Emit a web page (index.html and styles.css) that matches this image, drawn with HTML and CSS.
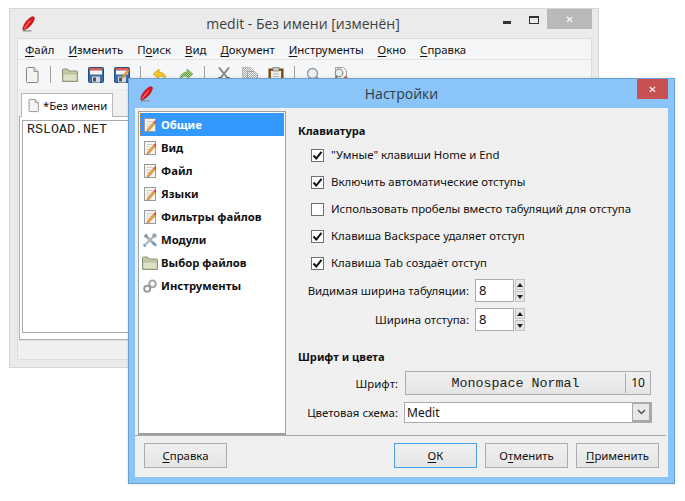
FILE: index.html
```html
<!DOCTYPE html>
<html lang="ru">
<head>
<meta charset="utf-8">
<title>medit</title>
<link rel="stylesheet" href="styles.css">
</head>
<body>
<svg class="defs" width="0" height="0" aria-hidden="true">
  <defs>
    <pattern id="dith-green" width="2" height="2" patternUnits="userSpaceOnUse"><rect width="2" height="2" fill="#5a9a34"/><rect width="1" height="1" fill="#b4d698"/><rect x="1" y="1" width="1" height="1" fill="#b4d698"/></pattern>
    <pattern id="dith-gray" width="2" height="2" patternUnits="userSpaceOnUse"><rect width="2" height="2" fill="#f2f2f2"/><rect width="1" height="1" fill="#a9a9a9"/><rect x="1" y="1" width="1" height="1" fill="#a9a9a9"/></pattern>
    <symbol id="i-quill" viewBox="0 0 16 16">
      <path d="M1.500 15.500h9v-1.300H2.500z" fill="#8d8d8d"/>
      <path d="M1.800 13.800C1.800 9.500 5.500 3.500 10.800.9c1.800-.7 3 .3 2.500 2C12 7.500 8 12 3.600 13.800z" fill="#e0141c" stroke="#a30c12" stroke-width=".6"/>
      <path d="M3 12.800 9.500 4.500" stroke="#ff9c90" stroke-width="1" fill="none"/>
    </symbol>
    <symbol id="i-new" viewBox="0 0 16 16">
      <path d="M2.500 1.500a1 1 0 0 1 1-1h6.500l4 4v10a1 1 0 0 1-1 1h-9.500a1 1 0 0 1-1-1z" fill="#f4f4f0" stroke="#858585"/>
      <path d="M10 .5v4h4" fill="#d8d8d4" stroke="#969696"/>
    </symbol>
    <symbol id="i-folder" viewBox="0 0 16 16">
      <path d="M.5 3a1 1 0 0 1 1-1h4l1.500 2h7.500a1 1 0 0 1 1 1v9.500H.5z" fill="#c3c9a4" stroke="#8c9070"/>
      <path d="M1 7h14v7H1z" fill="#dde1c6" stroke="#a6aa8a" stroke-width=".6"/>
    </symbol>
    <symbol id="i-save" viewBox="0 0 16 16">
      <rect x=".5" y=".5" width="15" height="15" rx="1" fill="#3b6ea8" stroke="#234f86"/>
      <rect x="2" y="1" width="12" height="2.500" fill="#e25a4c"/>
      <rect x="2" y="3.500" width="12" height="4" fill="#f4f4f4"/>
      <rect x="4" y="9.500" width="8" height="6" fill="#d8d8d8"/>
      <rect x="5" y="10.500" width="3" height="4" fill="#4a5560"/>
    </symbol>
    <symbol id="i-saveas" viewBox="0 0 16 16">
      <use href="#i-save"/>
      <path d="M8 9.500 14 2.500l1.500 1.300-6 7-2 .5z" fill="#e8a33c" stroke="#a4651e" stroke-width=".5"/>
      <path d="M14 2.500l1.500 1.300 .5-1.500-1-1z" fill="#d8403a"/>
    </symbol>
    <symbol id="i-undo" viewBox="0 0 16 16">
      <path d="M7 1 1 6l6 5V8c3 0 5 1 7 3 0-4-3-7-7-7z" transform="translate(0 1)" fill="#f1c62c" stroke="#c79a1c" stroke-width=".7"/>
      <path d="M3 13c3 2 8 2 11-1" stroke="#f1c62c" stroke-width="2" fill="none"/>
    </symbol>
    <symbol id="i-redo" viewBox="0 0 16 16">
      <path d="M9 1l6 5-6 5V8c-3 0-5 1-7 3 0-4 3-7 7-7z" transform="translate(0 1)" fill="url(#dith-green)" stroke="#5a9a34" stroke-width=".5"/>
      <path d="M2 13c3 2 8 2 11-1" stroke="url(#dith-green)" stroke-width="2" fill="none"/>
    </symbol>
    <symbol id="i-cut" viewBox="0 0 16 16">
      <path d="M3 .5 11 10.500M13 .5 5 10.500" stroke="#8a8a84" stroke-width="2" fill="none"/>
      <circle cx="4" cy="13" r="2.300" fill="none" stroke="#6e5a48" stroke-width="1.500"/>
      <circle cx="12" cy="13" r="2.300" fill="none" stroke="#6e5a48" stroke-width="1.500"/>
    </symbol>
    <symbol id="i-copy" viewBox="0 0 16 16">
      <path d="M.5.500h8l3 3v9h-11z" fill="url(#dith-gray)" stroke="#b5b5b5"/>
      <path d="M5.500 4.500h7l3 3v8h-10z" fill="url(#dith-gray)" stroke="#a5a5a5"/>
    </symbol>
    <symbol id="i-paste" viewBox="0 0 16 16">
      <rect x="1" y="2" width="14" height="13.500" fill="#8a5a1e" stroke="#6b4514"/>
      <rect x="3" y="4" width="10" height="11" fill="#f0f0ea"/>
      <rect x="5" y=".5" width="6" height="3.500" fill="#c9c9c0" stroke="#77766c" stroke-width=".7"/>
      <path d="M5 7h6M5 9.500h6M5 12h6" stroke="#b8b8b0"/>
    </symbol>
    <symbol id="i-find" viewBox="0 0 16 16">
      <circle cx="6.500" cy="6.500" r="5" fill="#e8eef2" stroke="#9a9a9a" stroke-width="1.400"/>
      <path d="M10.500 10.500 15 15" stroke="#75726c" stroke-width="2.200"/>
    </symbol>
    <symbol id="i-replace" viewBox="0 0 16 16">
      <path d="M3.500.5h8l3 3v10h-11z" fill="#f4f4f0" stroke="#a2a2a2"/>
      <circle cx="7" cy="6" r="3.800" fill="#e8eef2" stroke="#8f8f8f" stroke-width="1.200"/>
      <path d="M2.500 14 5 9" stroke="#7a7670" stroke-width="2"/>
      <path d="M9 13 14 8.500l1.500 1.500-5 4.500-2 .5z" fill="#d9563a"/>
    </symbol>
    <symbol id="i-prefdoc" viewBox="0 0 16 16">
      <rect x="2.500" y="1.500" width="11" height="13" fill="#f6f5f1" stroke="#9a9a9a"/>
      <path d="M4.500 4.500h6M4.500 7h4M4.500 9.500h3" stroke="#cfcdc6"/>
      <path d="M5.500 12 11.500 5l1.700 1.500-6 7-2.200.6z" fill="#eea23a" stroke="#b06a1c" stroke-width=".5"/>
      <path d="M11.500 5l1.200-1.400 1.700 1.500-1.200 1.400z" fill="#d8403a"/>
    </symbol>
    <symbol id="i-tools" viewBox="0 0 16 16">
      <path d="M3 3 13 13" stroke="#a6aeb6" stroke-width="2.600"/>
      <path d="M1.500 4.500 4.500 1.500 6 4 4 6z" fill="#8d969e"/>
      <path d="M13 3 3.500 12.500" stroke="#b3b5b7" stroke-width="2.400"/>
      <path d="M11 1.500h2.500l1 1V5l-2 1-2.500-2.500z" fill="#9da1a4"/>
      <path d="M2 11.500 4.500 14 3 15.200 1 13.200z" fill="#6d9ac8"/>
      <path d="M10 11l3.500 3.500 1.500-1.500-3.500-3.500z" fill="#6d9ac8"/>
    </symbol>
    <symbol id="i-gear" viewBox="0 0 16 16">
      <circle cx="10.500" cy="5.800" r="3.300" fill="none" stroke="#a8a8a8" stroke-width="2.200"/>
      <circle cx="5.200" cy="10.800" r="3" fill="none" stroke="#9b9b9b" stroke-width="2"/>
    </symbol>
    <symbol id="i-tick" viewBox="0 0 11 11">
      <path d="M1.500 5.500 4.300 8.500 9.500 1.800" fill="none" stroke="#111" stroke-width="2"/>
    </symbol>
  </defs>
</svg>

<section class="window main-window">
  <header class="titlebar main-titlebar">
    <svg class="quill"><use href="#i-quill"/></svg>
    <h1 class="title main-title">medit - Без имени [изменён]</h1>
    <div class="controls">
      <span class="ctl-min"></span>
      <span class="ctl-max"></span>
      <span class="ctl-close ctl-close-idle">✕</span>
    </div>
  </header>
  <div class="main-client">
    <nav class="menubar">
      <span><u>Ф</u>айл</span>
      <span><u>И</u>зменить</span>
      <span>П<u>о</u>иск</span>
      <span><u>В</u>ид</span>
      <span><u>Д</u>окумент</span>
      <span><u>И</u>нструменты</span>
      <span><u>О</u>кно</span>
      <span><u>С</u>правка</span>
    </nav>
    <div class="toolbar">
      <svg class="tb-icon"><use href="#i-new"/></svg>
      <span class="tb-sep"></span>
      <svg class="tb-icon"><use href="#i-folder"/></svg>
      <svg class="tb-icon"><use href="#i-save"/></svg>
      <svg class="tb-icon"><use href="#i-saveas"/></svg>
      <span class="tb-sep"></span>
      <svg class="tb-icon"><use href="#i-undo"/></svg>
      <svg class="tb-icon"><use href="#i-redo"/></svg>
      <span class="tb-sep"></span>
      <svg class="tb-icon"><use href="#i-cut"/></svg>
      <svg class="tb-icon"><use href="#i-copy"/></svg>
      <svg class="tb-icon"><use href="#i-paste"/></svg>
      <span class="tb-sep"></span>
      <svg class="tb-icon"><use href="#i-find"/></svg>
      <svg class="tb-icon"><use href="#i-replace"/></svg>
    </div>
    <div class="notebook">
      <div class="tab"><svg class="tab-icon"><use href="#i-new"/></svg><span>*Без имени</span></div>
      <div class="tab-panel">
        <div class="editor">RSLOAD.NET</div>
      </div>
    </div>
    <div class="statusbar"></div>
  </div>
</section>

<section class="window dialog">
  <header class="titlebar dialog-titlebar">
    <svg class="quill"><use href="#i-quill"/></svg>
    <h2 class="title dialog-title">Настройки</h2>
    <div class="controls">
      <span class="ctl-close ctl-close-red">✕</span>
    </div>
  </header>
  <div class="dialog-client">
    <div class="dialog-body">
      <ul class="pref-list">
        <li class="pref-item selected"><svg class="pref-icon"><use href="#i-prefdoc"/></svg>Общие</li>
        <li class="pref-item"><svg class="pref-icon"><use href="#i-prefdoc"/></svg>Вид</li>
        <li class="pref-item"><svg class="pref-icon"><use href="#i-prefdoc"/></svg>Файл</li>
        <li class="pref-item"><svg class="pref-icon"><use href="#i-prefdoc"/></svg>Языки</li>
        <li class="pref-item"><svg class="pref-icon"><use href="#i-prefdoc"/></svg>Фильтры файлов</li>
        <li class="pref-item"><svg class="pref-icon"><use href="#i-tools"/></svg>Модули</li>
        <li class="pref-item"><svg class="pref-icon"><use href="#i-folder"/></svg>Выбор файлов</li>
        <li class="pref-item"><svg class="pref-icon"><use href="#i-gear"/></svg>Инструменты</li>
      </ul>
      <div class="pref-page">
        <h3 class="group-title">Клавиатура</h3>
        <div class="check-rows">
          <div class="check-row"><span class="cb"><svg class="tick"><use href="#i-tick"/></svg></span><span class="cb-text">"Умные" клавиши Home и End</span></div>
          <div class="check-row"><span class="cb"><svg class="tick"><use href="#i-tick"/></svg></span><span class="cb-text">Включить автоматические отступы</span></div>
          <div class="check-row"><span class="cb"></span><span class="cb-text">Использовать пробелы вместо табуляций для отступа</span></div>
          <div class="check-row"><span class="cb"><svg class="tick"><use href="#i-tick"/></svg></span><span class="cb-text">Клавиша Backspace удаляет отступ</span></div>
          <div class="check-row"><span class="cb"><svg class="tick"><use href="#i-tick"/></svg></span><span class="cb-text">Клавиша Tab создаёт отступ</span></div>
        </div>
        <div class="spin-rows">
          <div class="spin-row">
            <span class="spin-label">Видимая ширина табуляции:</span>
            <span class="spin-input">8</span>
            <span class="spin-btns"><span class="spin-btn"><i class="arr-up"></i></span><span class="spin-btn"><i class="arr-down"></i></span></span>
          </div>
          <div class="spin-row">
            <span class="spin-label">Ширина отступа:</span>
            <span class="spin-input">8</span>
            <span class="spin-btns"><span class="spin-btn"><i class="arr-up"></i></span><span class="spin-btn"><i class="arr-down"></i></span></span>
          </div>
        </div>
        <h3 class="group-title group-two">Шрифт и цвета</h3>
        <div class="font-row">
          <span class="field-label">Шрифт:</span>
          <div class="font-btn"><span class="font-name">Monospace Normal</span><span class="font-size">10</span></div>
        </div>
        <div class="scheme-row">
          <span class="field-label">Цветовая схема:</span>
          <div class="combo"><span class="combo-text">Medit</span><span class="combo-arrow"><svg class="chev" viewBox="0 0 9 6"><path d="M1 1l3.500 3.500L8 1" fill="none" stroke="#555" stroke-width="1.500"/></svg></span></div>
        </div>
      </div>
    </div>
    <footer class="dialog-footer">
      <button class="btn"><u>С</u>правка</button>
      <span class="spacer"></span>
      <button class="btn btn-default"><u>О</u>К</button>
      <button class="btn">О<u>т</u>менить</button>
      <button class="btn"><u>П</u>рименить</button>
    </footer>
  </div>
</section>
</body>
</html>
```
FILE: styles.css
```css
* { box-sizing: border-box; }
html, body { margin: 0; padding: 0; width: 685px; height: 501px; overflow: hidden; background: #fff; }
body { font-family: "Noto Sans", "Liberation Sans", sans-serif; font-size: 11.4px; color: #111; }
.defs { position: absolute; }
u { text-decoration-thickness: 1px; text-underline-offset: 2px; }
h1, h2, h3, ul { margin: 0; padding: 0; }

.window { position: absolute; display: flex; flex-direction: column; }
.main-window { left: 9px; top: 8px; width: 590px; height: 360px; background: #ebebeb; border: 1px solid #d6d6d6; }
.dialog { left: 128px; top: 78px; width: 547px; height: 406px; background: #8bc4f8; border: 1px solid #6b9fcf; box-shadow: 0 0 3px rgba(0,0,0,.12); }

.titlebar { display: grid; grid-template-columns: 1fr auto 1fr; flex: none; }
.main-titlebar { height: 29px; padding: 0 13px 0 11px; }
.main-titlebar .controls { margin-right: -7px; }
.dialog-titlebar { height: 29px; padding: 0 10px 0 10px; }
.dialog-titlebar .controls { margin-right: -4px; }
.quill { width: 16px; height: 16px; align-self: center; margin-top: 1px; }
.title { font-family: "Open Sans", sans-serif; font-weight: 400; line-height: 29px; color: #3f3f3f; white-space: nowrap; }
.main-title { font-size: 14px; }
.dialog-title { font-size: 14px; color: #2d3c48; }
.controls { display: flex; justify-content: flex-end; align-items: flex-start; }
.ctl-min { width: 8px; height: 3px; background: #333; margin: 12px 18px 0 0; }
.ctl-max { width: 10px; height: 8px; border: 1px solid #333; border-top-width: 2px; margin: 7px 8px 0 0; }
.ctl-close { display: flex; align-items: center; justify-content: center; height: 20px; color: #fff; font-family: "DejaVu Sans", sans-serif; font-size: 10px; font-weight: 700; }
.ctl-close-idle { width: 45px; background: #b9b9b9; }
.ctl-close-red { width: 31px; background: #c75050; }

.main-client { flex: 1; margin: 0 6px 7px 7px; display: flex; flex-direction: column; background: #f0f0f0; border: 1px solid #dcdcdc; min-height: 0; }
.menubar { display: flex; gap: 14px; height: 21px; flex: none; padding-left: 7px; align-items: center; background: #f5f6f7; border-bottom: 1px solid #e4e4e4; white-space: nowrap; }
.toolbar { display: flex; gap: 10px; height: 30px; flex: none; padding: 7px 0 0 6px; background: #f5f6f7; border-bottom: 1px solid #ededed; }
.tb-icon { width: 16px; height: 16px; flex: none; }
.tb-sep { width: 2px; height: 17px; flex: none; border-left: 1px solid #a0a0a0; margin-top: -1px; }
.notebook { flex: 1; display: flex; flex-direction: column; padding: 3px 1px 0; min-height: 0; }
.tab { display: flex; align-items: center; gap: 3px; width: 92px; height: 24px; margin-left: 2px; padding: 0 0 0 5px; background: #fff; border: 1px solid #b9b9b9; border-bottom: 0; margin-bottom: -1px; position: relative; z-index: 1; white-space: nowrap; }
.tab-icon { width: 13px; height: 15px; flex: none; }
.tab-panel { flex: 1; background: #fff; border: 1px solid #b0b0b0; padding: 3px 2px 6px; min-height: 0; }
.editor { height: 100%; background: #fff; border: 1px solid #a8a8a8; font-family: "Liberation Mono", monospace; font-size: 13.33px; line-height: 15px; padding: 1px 4px 0; color: #222; }
.statusbar { height: 19px; flex: none; background: #f0f0f0; border-top: 1px solid #dfdfdf; }

.dialog-client { flex: 1; margin: 0 6px 6px 6px; background: #f0f0f0; display: flex; flex-direction: column; min-height: 0; }
.dialog-body { display: flex; height: 328px; flex: none; padding: 3px 2px 0 3px; border-bottom: 1px solid #a6a6a6; margin-right: 2px; }
.pref-list { list-style: none; width: 148px; height: 324px; flex: none; background: #fff; border: 1px solid #a0a0a0; border-bottom-width: 2px; padding: 1px; }
.pref-item { display: flex; align-items: center; gap: 3px; height: 23px; padding-left: 2px; font-size: 11.3px; font-weight: 700; color: #111; white-space: nowrap; }
.pref-item.selected { background: #3399ff; color: #fff; outline: 1px dotted #c8742a; outline-offset: -1px; }
.pref-icon { width: 16px; height: 16px; flex: none; }

.pref-page { flex: 1; padding: 12px 0 0 12px; min-width: 0; }
.group-title { font-size: 11.1px; font-weight: 700; line-height: 16px; color: #111; }
.check-rows { display: flex; flex-direction: column; gap: 7px; margin-top: 6px; padding-left: 13px; }
.check-row { display: flex; align-items: center; gap: 7px; height: 20px; white-space: nowrap; }
.cb-text { padding-bottom: 2px; }
.cb { display: flex; align-items: center; justify-content: center; width: 13px; height: 13px; flex: none; background: #fff; border: 1px solid #707070; }
.tick { width: 11px; height: 11px; }
.spin-rows { display: flex; flex-direction: column; gap: 6px; margin-top: 6px; }
.spin-row { display: flex; align-items: center; height: 23px; margin-left: -1px; }
.spin-label { width: 172px; text-align: right; white-space: nowrap; }
.spin-input { width: 39px; height: 23px; margin-left: 6px; padding-left: 3px; line-height: 21px; background: #fff; border: 1px solid #ababab; font-size: 13px; }
.spin-btns { display: flex; flex-direction: column; gap: 1px; margin-left: 1px; }
.spin-btn { display: flex; align-items: center; justify-content: center; width: 10px; height: 11px; background: #e6e6e6; border: 1px solid #c4c4c4; }
.arr-up, .arr-down { width: 0; height: 0; border-left: 3px solid transparent; border-right: 3px solid transparent; }
.arr-up { border-bottom: 4px solid #222; }
.arr-down { border-top: 4px solid #222; }
.group-two { margin-top: 18px; }
.field-label { width: 100px; text-align: right; white-space: nowrap; flex: none; }
.font-row { display: flex; align-items: center; margin-top: 6px; height: 24px; }
.font-btn { display: flex; align-items: center; width: 246px; height: 24px; margin-left: 7px; background: linear-gradient(#f0f0f0, #e5e5e5); border: 1px solid #acacac; }
.font-name { flex: 1; text-align: center; font-family: "Liberation Mono", monospace; font-size: 13.33px; color: #222; }
.font-size { width: 25px; height: 20px; line-height: 20px; text-align: center; border-left: 1px solid #acacac; font-size: 12px; }
.scheme-row { display: flex; align-items: center; margin-top: 7px; height: 21px; }
.combo { display: flex; width: 248px; height: 21px; margin-left: 6px; background: #fff; border: 1px solid #ababab; }
.combo-text { flex: 1; line-height: 19px; padding-left: 2px; font-size: 12px; }
.combo-arrow { display: flex; align-items: center; justify-content: center; width: 19px; background: #e8e8e8; border: 1px solid #a8a8a8; border-right-width: 2px; border-bottom-width: 2px; }
.chev { width: 9px; height: 6px; }

.dialog-footer { display: flex; gap: 8px; padding: 7px 9px 0 9px; }
.spacer { flex: 1; }
.btn { width: 83px; height: 25px; padding: 0; font: inherit; color: #111; background: linear-gradient(#f0f0f0, #e5e5e5); border: 1px solid #acacac; }
.btn-default { border-color: #4a9fe5; }
```
